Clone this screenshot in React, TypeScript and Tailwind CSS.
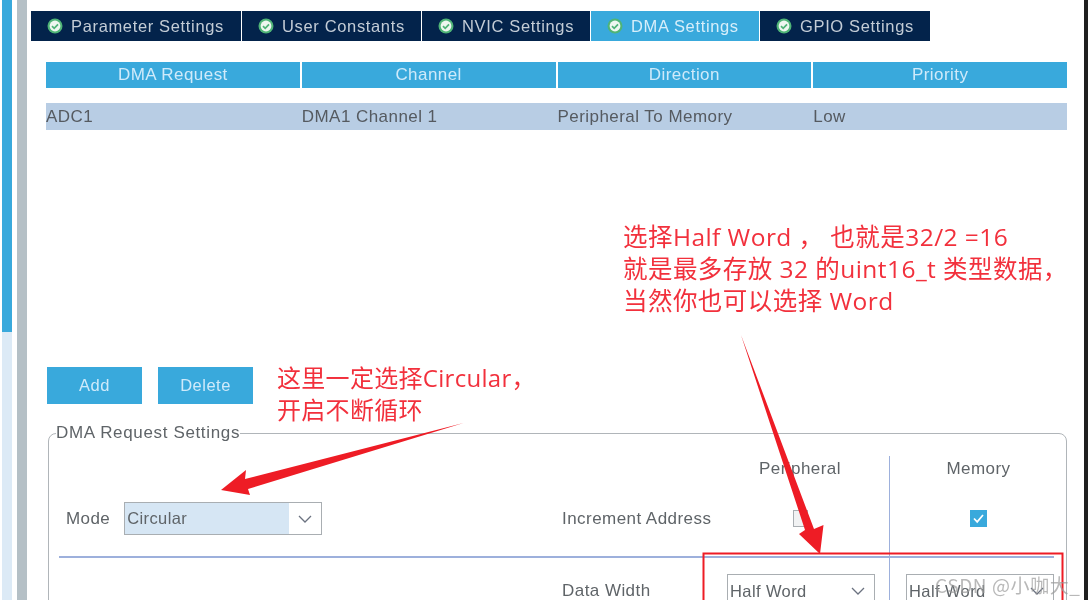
const sans = "font-['Liberation_Sans',Arial,sans-serif]";

const tabs = [
  { label: "Parameter Settings", width: "w-[210px]" },
  { label: "User Constants", width: "w-[179px]" },
  { label: "NVIC Settings", width: "w-[168px]" },
  { label: "DMA Settings", width: "w-[168px]", active: true },
  { label: "GPIO Settings", width: "w-[170px]" },
];

const columns = ["DMA Request", "Channel", "Direction", "Priority"];
const row = ["ADC1", "DMA1 Channel 1", "Peripheral To Memory", "Low"];

function TabCheck() {
  return (
    <svg width="16" height="16" viewBox="0 0 16 16" className="shrink-0">
      <circle cx="8" cy="8" r="7.5" fill="#4fb477" />
      <circle cx="8" cy="8" r="5.4" fill="#eef7f0" />
      <path d="M5 8.2l2.2 2.2L11 6.4" fill="none" stroke="#4fb477" strokeWidth="1.7" />
    </svg>
  );
}

function Chevron() {
  return (
    <svg width="16" height="10" viewBox="0 0 16 10" className="shrink-0">
      <path d="M2 2l6 6 6-6" fill="none" stroke="#6b7280" strokeWidth="1.3" />
    </svg>
  );
}

function Select({ value, fill, className }: { value: string; fill?: boolean; className: string }) {
  return (
    <div className={`flex border border-[#a9aeb2] bg-white text-[16.5px] tracking-[0.4px] text-[#5f6468] ${className}`}>
      <div className={`flex flex-1 items-center pl-[2px] ${fill ? "bg-[#d6e6f4]" : ""}`}>{value}</div>
      <div className="flex w-[32px] items-center justify-center">
        <Chevron />
      </div>
    </div>
  );
}

export default function App() {
  return (
    <div className={`relative flex h-[600px] w-[1088px] overflow-hidden bg-white blur-[0.4px] ${sans}`}>
      {/* left rail: scrollbar + gray gutter */}
      <div className="ml-[2px] flex h-full w-[10px] flex-col bg-[#dceaf6]">
        <div className="h-[332px] bg-[#39a9dc]" />
      </div>
      <div className="ml-[5px] h-full w-[10px] bg-[#b5c0c6]" />

      <div className="ml-[2px] flex min-w-0 flex-1 flex-col">
        {/* tab strip */}
        <div className="mt-[11px] flex gap-px pl-[2px]">
          {tabs.map((t) => (
            <div
              key={t.label}
              className={`flex h-[30px] items-center gap-[8px] pl-[16px] text-[16.5px] tracking-[0.65px] ${t.width} ${
                t.active ? "bg-[#39a9dc] text-[#d6eefa]" : "bg-[#03234b] text-[#c3ccd6]"
              }`}
            >
              <TabCheck />
              <span className="whitespace-nowrap">{t.label}</span>
            </div>
          ))}
        </div>
        <div className="h-[4px] bg-[#39a9dc]" />

        {/* DMA table */}
        <div className="mx-[17px] mt-[21px] w-[1021px]">
          <div className="grid h-[26px] grid-cols-4 gap-[2px]">
            {columns.map((c) => (
              <div key={c} className="flex items-center justify-center bg-[#39a9dc] text-[17px] tracking-[0.45px] text-[#cfeafa]">
                {c}
              </div>
            ))}
          </div>
          <div className="mt-[15px] grid h-[27px] grid-cols-4 gap-[2px] bg-[#b8cde4]">
            {row.map((c) => (
              <div key={c} className="flex items-center text-[17px] tracking-[0.45px] text-[#555a60]">
                {c}
              </div>
            ))}
          </div>
        </div>

        {/* add / delete */}
        <div className="ml-[18px] mt-[237px] flex gap-[16px]">
          <button className="h-[37px] w-[95px] bg-[#39a9dc] text-[16.5px] tracking-[0.5px] text-[#cfeafa]">Add</button>
          <button className="h-[37px] w-[95px] bg-[#39a9dc] text-[16.5px] tracking-[0.5px] text-[#cfeafa]">Delete</button>
        </div>

        {/* request settings */}
        <fieldset className="ml-[19px] mt-[19px] h-[300px] w-[1017px] rounded-tl-[8px] rounded-tr-[8px] border border-[#b0b5b9] pt-[13px]">
          <legend className="ml-[7px] text-[17px] leading-[20px] tracking-[0.65px] text-[#5f6468]">DMA Request Settings</legend>
          <div className="grid grid-cols-[513px_328px_176px]">
            <div className="flex h-[100px] items-center pl-[17px] pt-[25px]">
              <span className="mr-[14px] text-[17px] tracking-[0.4px] text-[#5f6468]">Mode</span>
              <Select value="Circular" fill className="h-[33px] w-[198px]" />
            </div>
            <div className="flex h-[100px] border-r border-[#9db0dc]">
              <div className="flex w-[177px] items-center pt-[25px] text-[17px] tracking-[0.45px] text-[#5f6468]">Increment Address</div>
              <div className="flex flex-1 flex-col items-center pr-[28px] text-[17px] tracking-[0.45px] text-[#5f6468]">
                <span>Peripheral</span>
                <span className="mt-[28px] h-[17px] w-[15px] border border-[#a9aeb2] bg-[#f1f2f3]" />
              </div>
            </div>
            <div className="flex h-[100px] flex-col items-center pl-[1px] text-[17px] tracking-[0.45px] text-[#5f6468]">
              <span>Memory</span>
              <span className="mt-[28px] flex h-[17px] w-[17px] items-center justify-center bg-[#39a9dc]">
                <svg width="13" height="13" viewBox="0 0 13 13">
                  <path d="M2 6.5l3.2 3.4L11 3" fill="none" stroke="#fff" strokeWidth="1.7" />
                </svg>
              </span>
            </div>
          </div>
          <div className="ml-[10px] h-[2px] w-[995px] bg-[#9db0dc]" />
          <div className="grid grid-cols-[513px_328px_176px]">
            <div />
            <div className="flex h-[80px] border-r border-[#9db0dc] pt-[16px]">
              <div className="w-[165px] pt-[4px] text-[17px] tracking-[0.45px] text-[#5f6468]">Data Width</div>
              <Select value="Half Word" className="h-[34px] w-[148px]" />
            </div>
            <div className="pl-[16px] pt-[16px]">
              <Select value="Half Word" className="h-[34px] w-[148px]" />
            </div>
          </div>
        </fieldset>
      </div>

      <div className="h-full w-[4px] shrink-0 bg-[#202020]" />

      {/* red annotations pasted over the screenshot */}
      <div className="absolute left-[277px] top-[362px] font-['Open_Sans','Noto_Sans_CJK_SC',sans-serif] text-[24px] leading-[32px] tracking-[0.3px] text-[#f2303c]">
        <div>这里一定选择Circular，</div>
        <div>开启不断循环</div>
      </div>
      <div className="absolute left-[623px] top-[221px] whitespace-nowrap font-['Open_Sans','Noto_Sans_CJK_SC',sans-serif] text-[24.5px] leading-[32px] tracking-[0.45px] text-[#f2303c]">
        <div>选择Half Word ， 也就是32/2 =16</div>
        <div>就是最多存放 32 的uint16_t 类型数据，</div>
        <div>当然你也可以选择 Word</div>
      </div>
      <svg className="absolute left-0 top-0" width="1088" height="600" viewBox="0 0 1088 600">
        <polygon points="463.5,423 245,479 246,470 221,490 250,495 248,489" fill="#ee1c25" />
        <polygon points="741,335 814,529 823.5,525 820,554 799,534 805,530" fill="#ee1c25" />
        <rect x="703.5" y="553.5" width="359" height="60" fill="none" stroke="#ee1c25" strokeWidth="2" />
      </svg>
      <div className="absolute left-[935px] top-[571px] whitespace-nowrap font-['Noto_Sans_CJK_SC',sans-serif] text-[19px] tracking-[0.6px] text-[#9a9a9a]/70">
        CSDN @小咖大_
      </div>
    </div>
  );
}
